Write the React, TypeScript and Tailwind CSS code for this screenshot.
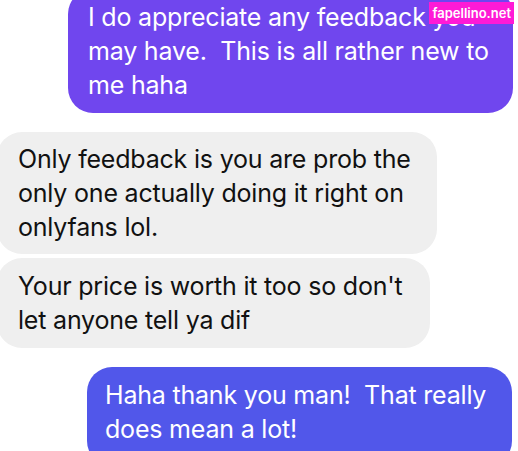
export default function App() {
  return (
    <div
      className="relative h-[451px] w-[518px] overflow-hidden bg-white"
      style={{ fontFamily: "Inter, 'Noto Sans', sans-serif" }}
    >
      <div className="flex flex-col tracking-[-0.2px]">
        <div className="ml-[68px] mt-[-11px] w-[445px] rounded-[25px] bg-[#7046ee] px-[20px] py-[11px] text-[25px] leading-[34px] text-white whitespace-nowrap">
          I do appreciate any feedback you
          <br />
          may have.&nbsp; This is all rather new to
          <br />
          me haha
        </div>

        <div className="ml-[-3px] mt-[19px] w-[440px] rounded-[25px] bg-[#efefef] py-[10px] pl-[21px] text-[25px] leading-[34px] text-[#111111] whitespace-nowrap">
          Only feedback is you are prob the
          <br />
          only one actually doing it right on
          <br />
          onlyfans lol.
        </div>

        <div className="ml-[-3px] mt-[4px] w-[433px] rounded-[25px] bg-[#efefef] py-[11px] pl-[21px] text-[25px] leading-[34px] text-[#111111] whitespace-nowrap">
          Your price is worth it too so don't
          <br />
          let anyone tell ya dif
        </div>

        <div className="ml-[87px] mt-[19px] w-[425px] rounded-[25px] bg-[#5157ea] py-[11px] pb-[20px] pl-[18px] text-[25px] leading-[34px] text-white whitespace-nowrap">
          Haha thank you man!&nbsp; That really
          <br />
          does mean a lot!
        </div>
      </div>

      <div className="absolute right-[4px] top-[2px] bg-[#ff1ad6] px-[3px] text-[13px] font-semibold leading-[22px] text-white">
        fapellino.net
      </div>
    </div>
  );
}
